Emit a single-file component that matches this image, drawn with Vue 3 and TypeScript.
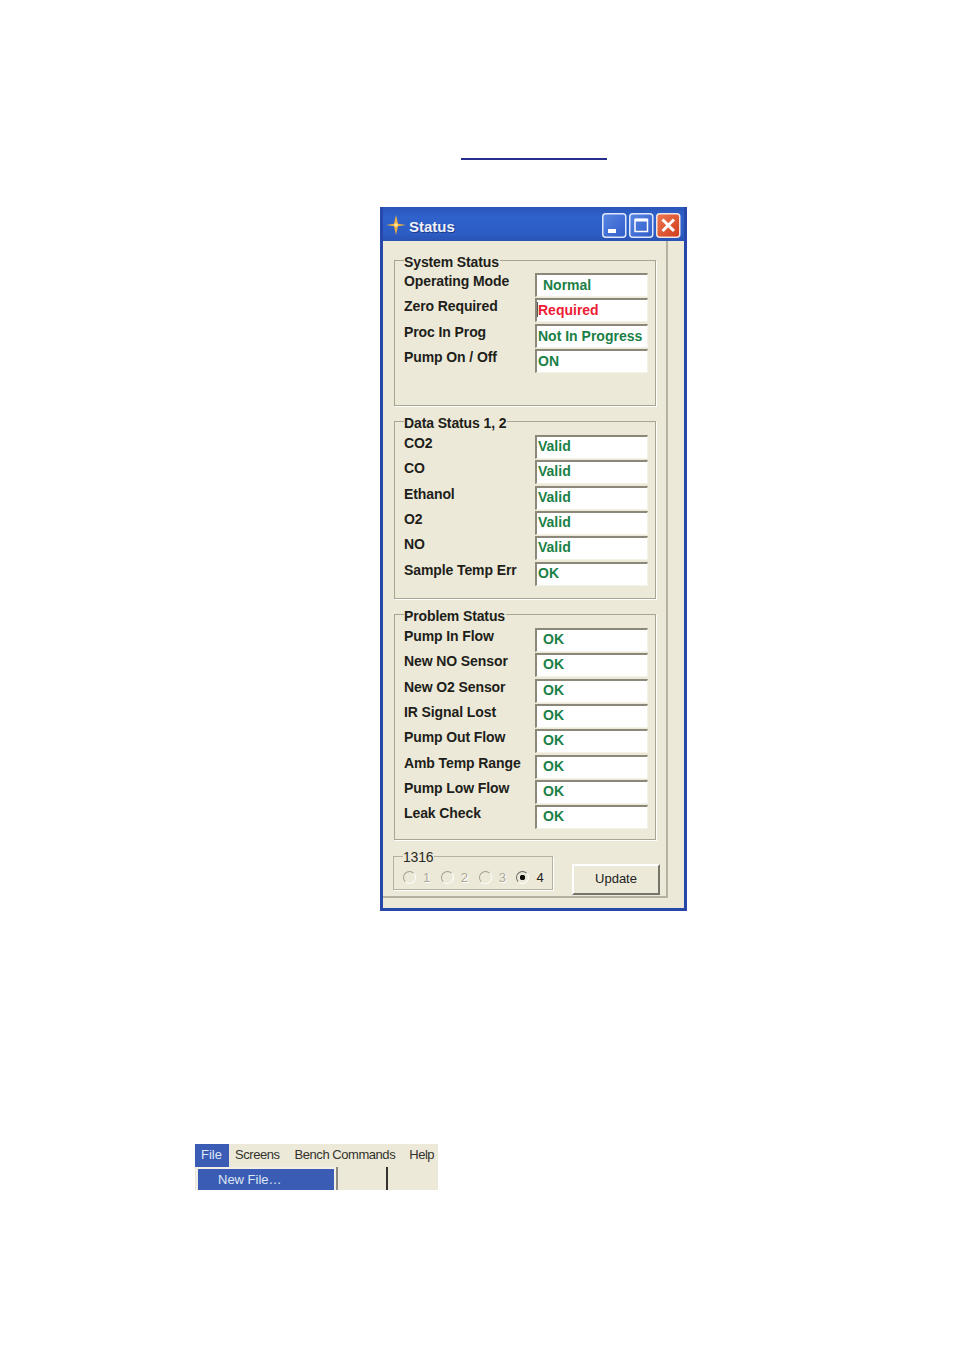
<script setup lang="ts">
interface Row { label: string; value: string; kind?: string; shift?: boolean }
const system: Row[] = [
  { label: 'Operating Mode', value: 'Normal', kind: 'ind' },
  { label: 'Zero Required', value: 'Required', kind: 'red', shift: true },
  { label: 'Proc In Prog', value: 'Not In Progress' },
  { label: 'Pump On / Off', value: 'ON' },
]
const data: Row[] = [
  { label: 'CO2', value: 'Valid' },
  { label: 'CO', value: 'Valid' },
  { label: 'Ethanol', value: 'Valid' },
  { label: 'O2', value: 'Valid' },
  { label: 'NO', value: 'Valid' },
  { label: 'Sample Temp Err', value: 'OK' },
]
const problem: Row[] = ['Pump In Flow', 'New NO Sensor', 'New O2 Sensor', 'IR Signal Lost', 'Pump Out Flow', 'Amb Temp Range', 'Pump Low Flow', 'Leak Check']
  .map((label) => ({ label, value: 'OK', kind: 'ind' }))
const groups = [
  { title: 'System Status', rows: system, cls: 'g1' },
  { title: 'Data Status 1, 2', rows: data, cls: 'g2' },
  { title: 'Problem Status', rows: problem, cls: 'g3' },
]
const radios = [
  { n: '1', on: false },
  { n: '2', on: false },
  { n: '3', on: false },
  { n: '4', on: true },
]
</script>

<template>
  <div class="page">
    <div class="rule"></div>
    <div class="window">
      <div class="titlebar">
        <svg class="logo" width="20" height="20" viewBox="0 0 20 20">
          <path d="M0 10L8 8.8L10 0L12 8.8L20 10L12 11.2L10 20L8 11.2Z" fill="#f0b040" />
          <circle cx="10" cy="10" r="1.8" fill="#ffe6a0" />
        </svg>
        <span class="title">Status</span>
        <div class="controls">
          <svg width="25" height="25" viewBox="0 0 25 25">
            <defs>
              <linearGradient id="blueBtn" x1="0" y1="0" x2="1" y2="1">
                <stop offset="0" stop-color="#5a86e4" />
                <stop offset="1" stop-color="#2f5cc8" />
              </linearGradient>
              <linearGradient id="redBtn" x1="0" y1="0" x2="1" y2="1">
                <stop offset="0" stop-color="#ec7a52" />
                <stop offset="1" stop-color="#d23a1c" />
              </linearGradient>
            </defs>
            <rect x=".75" y=".75" width="23" height="23.5" rx="3" fill="url(#blueBtn)" stroke="#dfe8fa" stroke-width="1.5" />
            <rect x="6" y="16" width="8" height="4" fill="#fff" />
          </svg>
          <svg width="25" height="25" viewBox="0 0 25 25">
            <rect x=".75" y=".75" width="23" height="23.5" rx="3" fill="url(#blueBtn)" stroke="#dfe8fa" stroke-width="1.5" />
            <rect x="6" y="6.5" width="12.5" height="12" fill="none" stroke="#fff" stroke-width="1.5" />
            <rect x="6" y="5.5" width="12.5" height="3" fill="#fff" />
          </svg>
          <svg width="25" height="25" viewBox="0 0 25 25">
            <rect x=".75" y=".75" width="23" height="23.5" rx="3" fill="url(#redBtn)" stroke="#f0e4e0" stroke-width="1.5" />
            <path d="M6.5 6.5L18 18M18 6.5L6.5 18" stroke="#fff" stroke-width="3" />
          </svg>
        </div>
      </div>
      <div class="client">
        <div class="main">
          <div class="column">
            <section v-for="g in groups" :key="g.title" class="group" :class="g.cls">
              <span class="legend">{{ g.title }}</span>
              <div v-for="r in g.rows" :key="r.label" class="row">
                <span class="label">{{ r.label }}</span>
                <span class="field" :class="r.kind">
                  <i v-if="r.shift" class="caret"></i>{{ r.value }}
                </span>
              </div>
            </section>
            <div class="bottom">
              <section class="radiobox">
                <span class="legend plain">1316</span>
                <div v-for="r in radios" :key="r.n" class="radio" :class="{ on: r.on }">
                  <span class="dot"></span><span>{{ r.n }}</span>
                </div>
              </section>
              <button class="update">Update</button>
            </div>
          </div>
          <div class="side"></div>
        </div>
      </div>
    </div>
    <div class="menu">
      <div class="menubar">
        <span class="item active">File</span>
        <span class="item">Screens</span>
        <span class="item">Bench Commands</span>
        <span class="item">Help</span>
      </div>
      <div class="under">
        <div class="dropdown">New File…</div>
        <div class="divider"></div>
      </div>
    </div>
  </div>
</template>

<style>
html, body { margin: 0; background: #fff; }
</style>

<style scoped>
.page {
  width: 954px;
  height: 1350px;
  display: flex;
  flex-direction: column;
  background: #fff;
  font-family: "Liberation Sans", Arial, sans-serif;
  box-sizing: border-box;
  padding-top: 158px;
  overflow: hidden;
}
.rule {
  width: 146px;
  height: 2px;
  margin-left: 461px;
  background: #26308c;
}
.window {
  width: 307px;
  height: 704px;
  margin: 47px 0 0 380px;
  background: #2748a8;
  display: flex;
  flex-direction: column;
  box-sizing: border-box;
  padding: 0 3px 3px;
}
.titlebar {
  height: 34px;
  flex: none;
  display: flex;
  align-items: center;
  padding: 2px 0 0 3px;
  box-sizing: border-box;
  background: linear-gradient(#2a55b8, #2f62cc 30%, #2c5cc4 80%, #2a52b4);
}
.logo { flex: none; }
.title {
  margin: 2px 0 0 3px;
  color: #eef2fb;
  font-size: 15px;
  font-weight: 700;
  text-shadow: 1px 1px 0 #1c3a86;
}
.controls {
  margin-left: auto;
  margin-right: 3px;
  display: flex;
  gap: 2px;
}
.client {
  flex: 1;
  display: flex;
  flex-direction: column;
  background: #ece9d8;
  min-height: 0;
  padding-bottom: 10px;
  box-sizing: border-box;
}
.main {
  flex: 1;
  min-height: 0;
  display: flex;
}
.column {
  width: 283px;
  flex: none;
  padding: 19px 0 0 11px;
  box-sizing: border-box;
  display: flex;
  flex-direction: column;
  border-bottom: 2px solid #b5b2a0;
}
.side {
  width: 2px;
  background: #b5b2a0;
}
.group {
  position: relative;
  width: 262px;
  box-sizing: border-box;
  border: 1px solid #a8a692;
  box-shadow: 1px 1px 0 #fff;
  flex: none;
}
.g1 { height: 146px; padding-top: 8px; }
.g2 { height: 178px; margin-top: 15px; padding-top: 9px; }
.g3 { height: 226px; margin-top: 15px; padding-top: 9px; }
.legend {
  position: absolute;
  left: 9px;
  top: -7px;
  padding: 0 1px 0 0;
  background: #ece9d8;
  color: #1e1e1a;
  font-size: 14px;
  line-height: 17px;
  font-weight: 700;
  letter-spacing: -.12px;
}
.legend.plain {
  top: -8px;
  font-weight: 400;
  letter-spacing: -.2px;
  color: #2a2a24;
}
.row {
  height: 25.33px;
  display: flex;
}
.label {
  width: 131px;
  margin-left: 9px;
  padding-top: 3px;
  color: #1e1e1a;
  font-size: 14px;
  line-height: 18px;
  font-weight: 700;
  letter-spacing: -.1px;
  white-space: nowrap;
}
.field {
  width: 113px;
  height: 24px;
  box-sizing: border-box;
  margin-top: 4px;
  background: #fff;
  border: 2px solid #8b887a;
  border-right: 1px solid #f4f2e6;
  border-bottom: 1px solid #f4f2e6;
  color: #1a7f46;
  font-size: 14px;
  font-weight: 700;
  line-height: 20px;
  padding-left: 1px;
  white-space: nowrap;
}
.g2 .field, .g3 .field { line-height: 18px; }
.field.ind { padding-left: 6px; }
.field.red { color: #ee1c34; padding-left: 0; }
.caret {
  display: inline-block;
  width: 1px;
  height: 15px;
  background: #555;
  vertical-align: -2px;
}
.bottom {
  display: flex;
  margin: 16px 0 0 -1px;
  align-items: flex-start;
}
.radiobox {
  position: relative;
  width: 160px;
  height: 34px;
  box-sizing: border-box;
  border: 1px solid #b5b2a0;
  box-shadow: 1px 1px 0 #fff;
  display: flex;
  align-items: center;
  padding: 8px 0 0 9px;
  gap: 11.6px;
}
.radio {
  display: flex;
  align-items: center;
  gap: 7px;
  font-size: 13px;
  color: #aca899;
  text-shadow: 1px 1px 0 #fff;
}
.radio + .radio { margin-left: -1px; }
.radio.on { color: #222; text-shadow: none; }
.dot {
  width: 13px;
  height: 13px;
  box-sizing: border-box;
  border-radius: 50%;
  border: 1.5px solid #a09e8c;
  border-right-color: #fff;
  border-bottom-color: #fff;
}
.radio.on .dot {
  border-color: #666 #fff #fff #666;
  background: radial-gradient(circle, #111 0 2.5px, #ece9d8 3px);
}
.update {
  width: 88px;
  height: 31px;
  margin: 8px 0 0 19px;
  padding: 0 0 3px;
  box-sizing: border-box;
  background: #ece9d8;
  border: 0;
  border-top: 2px solid #fff;
  border-left: 2px solid #fff;
  border-right: 2px solid #77756a;
  border-bottom: 2px solid #77756a;
  font-family: inherit;
  font-size: 13px;
  color: #222;
}
.menu {
  width: 243px;
  height: 46px;
  margin: 233px 0 0 195px;
  background: #ece9d8;
  overflow: hidden;
}
.menubar {
  height: 23px;
  display: flex;
  font-size: 13px;
  line-height: 21px;
  color: #33332d;
  letter-spacing: -.45px;
}
.item { padding: 0 7px; white-space: nowrap; }
.item:nth-child(2) { padding-left: 6px; }
.item:nth-child(3) { padding-left: 8px; }
.item.active { width: 34px; flex: none; box-sizing: border-box; padding-left: 6px; background: #3a5cb4; color: #dfe6f6; letter-spacing: 0; }
.under { display: flex; height: 23px; }
.dropdown {
  width: 140px;
  margin-left: 1px;
  box-sizing: border-box;
  border: 2px solid #f2f0e6;
  border-bottom: 0;
  background: #3a5cb4;
  color: #dfe6f6;
  font-size: 13px;
  line-height: 22px;
  padding-left: 20px;
  box-shadow: 2px 0 0 #8c8a7e;
}
.divider {
  width: 2px;
  margin-left: 50px;
  background: #33332d;
}
</style>
